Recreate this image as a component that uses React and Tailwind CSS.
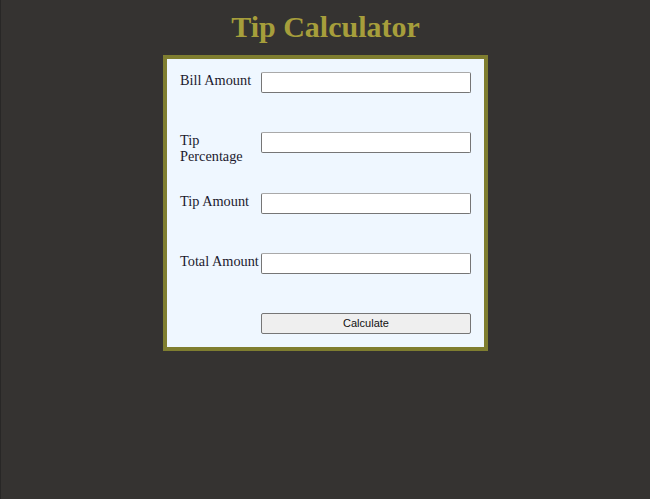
import React, { useState } from 'react';

const Row = ({ label, value, onChange }) => (
  <div className="flex items-start h-[60.3px]">
    <label className="w-[81px] shrink-0 text-[14.3px] leading-[16px] text-[#1c1a2e]">{label}</label>
    <input
      type="text"
      value={value}
      onChange={onChange}
      className="w-[210px] h-[21px] bg-white border border-[#767676] border-t-[#a9a9a9] rounded-[2px] px-1 text-[13px] outline-none"
    />
  </div>
);

export default function App() {
  const [form, setForm] = useState({ bill: '', pct: '', tip: '', total: '' });

  const calc = () => {
    const b = parseFloat(form.bill) || 0;
    const p = parseFloat(form.pct) || 0;
    const t = (b * p) / 100;
    setForm({ ...form, tip: t.toFixed(2), total: (b + t).toFixed(2) });
  };

  return (
    <div className="min-h-[499px] bg-[#353331] border-l border-[#282726] flex flex-col items-center font-['Liberation_Serif',serif]">
      {/* Title */}
      <h1 className="mt-[10px] text-[30px] leading-[34px] font-bold text-[#a69e3b]">Tip Calculator</h1>

      {/* Card */}
      <div className="mt-[11px] border-4 border-[#7f7e30] bg-[#eff7ff] p-[13px] w-[325px]">
        <Row label="Bill Amount" value={form.bill} onChange={(e) => setForm({ ...form, bill: e.target.value })} />
        <Row label="Tip Percentage" value={form.pct} onChange={(e) => setForm({ ...form, pct: e.target.value })} />
        <Row label="Tip Amount" value={form.tip} onChange={(e) => setForm({ ...form, tip: e.target.value })} />
        <Row label="Total Amount" value={form.total} onChange={(e) => setForm({ ...form, total: e.target.value })} />
        <div className="flex">
          <div className="w-[81px] shrink-0" />
          <button
            onClick={calc}
            className="w-[210px] h-[21px] bg-[#efefef] border border-[#767676] rounded-[2px] text-[11px] text-[#111] font-['Liberation_Sans',sans-serif]"
          >
            Calculate
          </button>
        </div>
      </div>
    </div>
  );
}
